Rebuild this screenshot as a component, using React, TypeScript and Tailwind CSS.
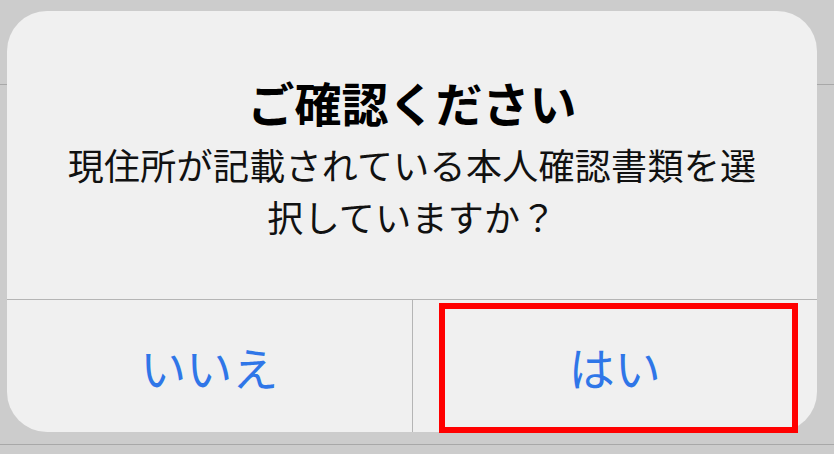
export default function App() {
  const font = { fontFamily: '"Noto Sans CJK JP", "Noto Sans", sans-serif' };
  return (
    <div
      className="relative w-[834px] h-[454px] overflow-hidden bg-[#cccccc] pt-[11px] pl-[7px]"
      style={font}
    >
      {/* background rows behind the sheet */}
      <div className="absolute left-0 right-0 top-[84px] h-px bg-[#a8a8a8]" />
      <div className="absolute left-0 right-0 top-[444px] h-px bg-[#a8a8a8]" />

      {/* alert */}
      <div className="relative flex flex-col w-[810px] h-[421px] rounded-[40px] bg-[#f0f0f0] overflow-hidden">
        <div className="flex flex-col items-center h-[288px] pt-[67px] text-center">
          <h1 className="text-[47px] leading-[47px] font-bold text-black">ご確認ください</h1>
          <p className="mt-[13px] text-[36px] leading-[52px] tracking-[0.3px] text-[#111111]">
            現住所が記載されている本人確認書類を選
            <br />
            択していますか？
          </p>
        </div>
        <div className="h-px bg-[#b5b5b5]" />
        <div className="flex flex-1">
          <button className="flex-1 flex items-center justify-center text-[46px] leading-none text-[#2f76e8]">
            いいえ
          </button>
          <div className="w-px bg-[#b5b5b5]" />
          <button className="flex-1 flex items-center justify-center text-[46px] leading-none text-[#2f76e8]">
            はい
          </button>
        </div>
      </div>

      {/* highlight */}
      <div className="absolute left-[439px] top-[303px] w-[359px] h-[130px] border-[6px] border-[#ff0000]" />
    </div>
  );
}
